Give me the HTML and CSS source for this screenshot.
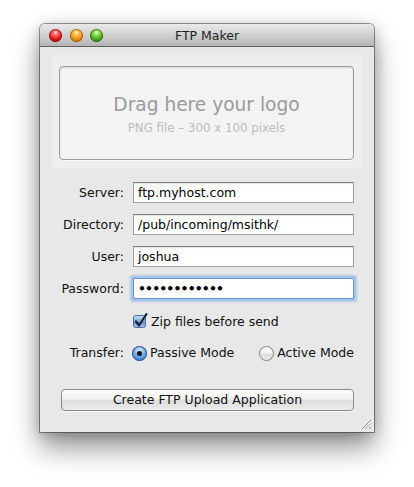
FILE: index.html
```html
<!DOCTYPE html>
<html>
<head>
<meta charset="utf-8">
<link rel="stylesheet" href="styles.css">
</head>
<body>
<div class="stage">
  <div class="window">
    <div class="titlebar">
      <div class="lights">
        <span class="light red"></span>
        <span class="light orange"></span>
        <span class="light green"></span>
      </div>
      <div class="title">FTP Maker</div>
    </div>
    <div class="content">
      <div class="drop-well">
        <div class="drop-box">
          <div class="drop-title">Drag here your logo</div>
          <div class="drop-sub">PNG file – 300 x 100 pixels</div>
        </div>
      </div>
      <div class="form">
        <label class="lbl">Server:</label>
        <div class="field">ftp.myhost.com</div>
        <label class="lbl">Directory:</label>
        <div class="field">/pub/incoming/msithk/</div>
        <label class="lbl">User:</label>
        <div class="field">joshua</div>
        <label class="lbl">Password:</label>
        <div class="field focus"><span class="dots">••••••••••••</span></div>
      </div>
      <div class="check-row">
        <svg class="check" width="16" height="16" viewBox="0 0 16 16">
          <defs>
            <linearGradient id="cg" x1="0" y1="0" x2="0" y2="1">
              <stop offset="0" stop-color="#c9def5"/>
              <stop offset="0.5" stop-color="#7fa9dc"/>
              <stop offset="0.55" stop-color="#5d8fd0"/>
              <stop offset="1" stop-color="#a9cdf2"/>
            </linearGradient>
          </defs>
          <rect x="0.5" y="2.5" width="12" height="12" rx="2" fill="url(#cg)" stroke="#4a6d9c"/>
          <path d="M3 8.5 L6 12.5 L13.5 1" fill="none" stroke="#1c2436" stroke-width="2.2" stroke-linecap="round" stroke-linejoin="round"/>
        </svg>
        <span class="check-label">Zip files before send</span>
      </div>
      <div class="radio-row">
        <span class="lbl">Transfer:</span>
        <div class="radios">
          <span class="radio on"><span class="dot"></span></span>
          <span class="radio-label">Passive Mode</span>
          <span class="radio off"></span>
          <span class="radio-label">Active Mode</span>
        </div>
      </div>
      <div class="button-row">
        <button class="push">Create FTP Upload Application</button>
      </div>
      <svg class="grip" width="11" height="11" viewBox="0 0 11 11">
        <path d="M1 10 L10 1 M4.5 10 L10 4.5 M8 10 L10 8" stroke="#8a8a8a" stroke-width="1" fill="none"/>
        <path d="M2 10 L10 2 M5.5 10 L10 5.5 M9 10 L10 9" stroke="#fafafa" stroke-width="0.8" fill="none"/>
      </svg>
    </div>
  </div>
</div>
</body>
</html>
```

FILE: styles.css
```css
* { box-sizing: border-box; }
html, body {
  margin: 0;
  background: #ffffff;
  font-family: "DejaVu Sans", "Liberation Sans", sans-serif;
  font-size: 12.5px;
  color: #111;
}
.stage {
  padding: 24px 0 0 40px;
  height: 487px;
  overflow: hidden;
}
.window {
  width: 334px;
  height: 408px;
  border-radius: 5px 5px 0 0;
  background: #e8e8e8;
  box-shadow: 0 0 0 1px rgba(0,0,0,0.38),
              0 16px 28px rgba(0,0,0,0.42),
              0 2px 14px rgba(0,0,0,0.22);
  display: flex;
  flex-direction: column;
}
.titlebar {
  height: 23px;
  border-radius: 5px 5px 0 0;
  background: linear-gradient(#e9e9e9, #d2d2d2 45%, #b5b5b5);
  border-bottom: 1px solid #5e5e5e;
  display: flex;
  align-items: center;
  position: relative;
}
.lights {
  display: flex;
  gap: 7.5px;
  padding-left: 9px;
  padding-top: 1px;
}
.light {
  width: 13px;
  height: 13px;
  border-radius: 50%;
  display: block;
}
.red {
  background: radial-gradient(circle at 50% 28%, #ffd1d1 0, #ff6a6a 22%, #d8141a 60%, #a10006 100%);
  box-shadow: inset 0 0 0 1px rgba(90,0,0,0.55);
}
.orange {
  background: radial-gradient(circle at 50% 28%, #fff0c8 0, #ffc250 22%, #e88a10 60%, #b35f00 100%);
  box-shadow: inset 0 0 0 1px rgba(110,60,0,0.55);
}
.green {
  background: radial-gradient(circle at 50% 28%, #e2ffcc 0, #95e258 22%, #46a316 60%, #2a7200 100%);
  box-shadow: inset 0 0 0 1px rgba(20,70,0,0.55);
}
.title {
  position: absolute;
  left: 0;
  right: 0;
  top: 4px;
  text-align: center;
  color: #1e1e1e;
  font-size: 12.5px;
}
.content {
  flex: 1;
  position: relative;
  display: flex;
  flex-direction: column;
}
.drop-well {
  margin: 8px 0 0 12px;
  width: 310px;
  height: 113px;
  background: #eeeeee;
  padding: 11px 8px 8px 7px;
}
.drop-box {
  height: 100%;
  border: 1px solid #9c9c9c;
  border-radius: 4px;
  background: #f3f3f3;
  box-shadow: inset 0 1px 2px rgba(0,0,0,0.12), 0 1px 0 #fafafa;
  display: flex;
  flex-direction: column;
  align-items: center;
  padding-top: 27px;
}
.drop-title {
  font-size: 18.6px;
  color: #9b9b9b;
  line-height: 22px;
}
.drop-sub {
  font-size: 11.8px;
  color: #bcbcbc;
  line-height: 14px;
  margin-top: 5px;
}
.form {
  margin-top: 14px;
  display: grid;
  grid-template-columns: 84px 221px;
  column-gap: 9px;
  row-gap: 11px;
  grid-auto-rows: 21px;
}
.lbl {
  text-align: right;
  line-height: 21px;
  color: #111;
}
.field {
  background: #ffffff;
  border: 1px solid #9f9f9f;
  border-top-color: #7f7f7f;
  box-shadow: inset 0 1px 1px rgba(0,0,0,0.12);
  padding-left: 4px;
  line-height: 19px;
  color: #000;
  white-space: nowrap;
  overflow: hidden;
}
.field.focus {
  border-color: #6d97cc;
  box-shadow: 0 0 0 2px #a7c6ec, 0 0 2px 3px rgba(120,165,225,0.45);
  border-radius: 1px;
}
.dots {
  font-weight: bold;
  letter-spacing: -0.9px;
  font-size: 12.5px;
}
.check-row {
  margin: 15px 0 0 93px;
  height: 16px;
  display: flex;
  align-items: center;
  gap: 2px;
}
.check { display: block; margin-top: -2px; }
.check-label { line-height: 16px; }
.radio-row {
  margin-top: 15px;
  height: 16px;
  display: grid;
  grid-template-columns: 84px auto;
  column-gap: 8px;
  align-items: center;
}
.radio-row .lbl { line-height: 16px; }
.radios {
  display: flex;
  align-items: center;
}
.radio {
  width: 15px;
  height: 15px;
  border-radius: 50%;
  display: flex;
  align-items: center;
  justify-content: center;
  margin-right: 3px;
}
.radio.on {
  background: radial-gradient(circle at 50% 30%, #d6e8fb 0, #8ab6e8 35%, #3f7fcf 75%, #6aa3e4 100%);
  box-shadow: inset 0 0 0 1px #3f5f8f;
}
.radio.on .dot {
  width: 5px;
  height: 5px;
  border-radius: 50%;
  background: #101820;
}
.radio.off {
  margin-left: 25px;
  background: linear-gradient(#ffffff, #f0f0f0 50%, #dadada 55%, #f4f4f4);
  box-shadow: inset 0 0 0 1px #8c8c8c;
}
.radio-label { line-height: 16px; }
.button-row {
  margin: 28px 0 0 21px;
}
.push {
  width: 293px;
  height: 22px;
  border: 1px solid #8a8a8a;
  border-radius: 4px;
  background: linear-gradient(#fdfdfd, #f0f0f0 45%, #dedede 52%, #e6e6e6 85%, #eeeeee);
  box-shadow: 0 1px 0 rgba(255,255,255,0.6);
  font-family: "DejaVu Sans", "Liberation Sans", sans-serif;
  font-size: 12.5px;
  color: #111;
  padding: 0;
  line-height: 20px;
}
.grip {
  position: absolute;
  right: 2px;
  bottom: 2px;
}
```
